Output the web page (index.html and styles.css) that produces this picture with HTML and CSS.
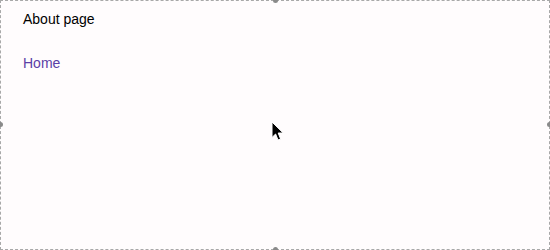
FILE: index.html
```html
<!DOCTYPE html>
<html lang="en">
<head>
    <meta charset="UTF-8">
    <meta name="viewport" content="width=device-width, initial-scale=1.0">
    <title>About page</title>
    <link rel="stylesheet" href="styles.css">
</head>
<body>
    <div class="frame">
        <span class="handle handle-top"></span>
        <span class="handle handle-left"></span>
        <span class="handle handle-right"></span>
        <span class="handle handle-bottom"></span>

        <div class="content">
            <p class="title">About page</p>
            <a class="home-link" href="#">Home</a>
        </div>

        <svg class="cursor" width="14" height="21" viewBox="0 0 14 21">
            <path d="M1 1 L1 16.5 L4.6 13 L7 19 L9.6 18 L7.2 12 L12.2 12 Z" fill="#000" stroke="#fff" stroke-width="1"/>
        </svg>
    </div>
</body>
</html>
```

FILE: styles.css
```css
body {
    margin: 0;
    font-family: "Liberation Sans", Arial, sans-serif;
}
.frame {
    position: relative;
    width: 550px;
    height: 250px;
    box-sizing: border-box;
    border: 1px dashed #a8a8a8;
    background-color: #fffcfd;
}
.content {
    padding: 8px 22px;
}
.title {
    margin: 0;
    font-size: 14px;
    line-height: 20px;
    color: #000;
}
.home-link {
    display: inline-block;
    margin-top: 24px;
    font-size: 14px;
    line-height: 20px;
    color: #5b3fa6;
    text-decoration: none;
}
.handle {
    position: absolute;
    width: 5px;
    height: 5px;
    border-radius: 50%;
    background-color: #8a8a8a;
}
.handle-top {
    top: -3px;
    left: 272px;
}
.handle-bottom {
    bottom: -3px;
    left: 272px;
}
.handle-left {
    left: -3px;
    top: 121px;
}
.handle-right {
    right: -3px;
    top: 121px;
}
.cursor {
    position: absolute;
    left: 270px;
    top: 120px;
}
```
